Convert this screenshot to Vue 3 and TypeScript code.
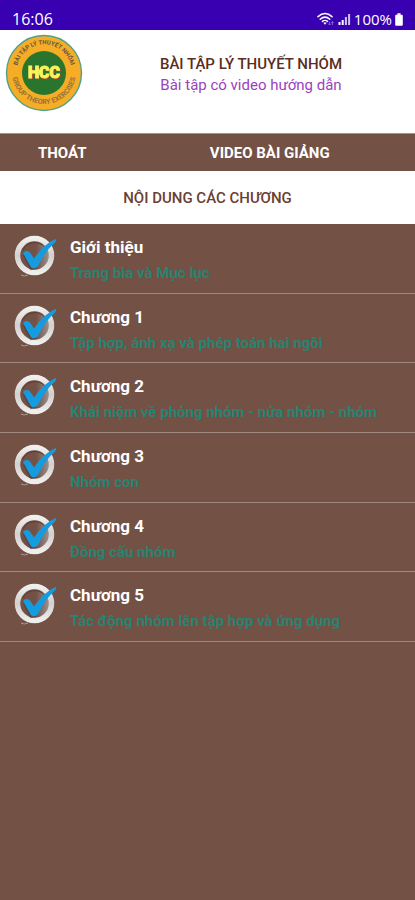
<script setup lang="ts">
interface Chapter {
  id: number
  title: string
  summary: string
}

const chapters: Chapter[] = [
  { id: 0, title: 'Giới thiệu', summary: 'Trang bìa và Mục lục' },
  { id: 1, title: 'Chương 1', summary: 'Tập hợp, ánh xạ và phép toán hai ngôi' },
  { id: 2, title: 'Chương 2', summary: 'Khái niệm về phỏng nhóm - nửa nhóm - nhóm' },
  { id: 3, title: 'Chương 3', summary: 'Nhóm con' },
  { id: 4, title: 'Chương 4', summary: 'Đồng cấu nhóm' },
  { id: 5, title: 'Chương 5', summary: 'Tác động nhóm lên tập hợp và ứng dụng' },
]
</script>

<template>
  <div class="screen">
    <div class="status">
      <span class="clock">16:06</span>
      <div class="indicators">
        <svg class="wifi" viewBox="0 0 18 14" aria-hidden="true">
          <g fill="none" stroke="#fff" stroke-linecap="round">
            <path d="M1 4.6Q8 -1.6 15 4.6" stroke-width="1.6" />
            <path d="M3.2 7.2Q8 3 12.8 7.2" stroke-width="1.5" />
            <path d="M5.4 9.4Q8 7.4 10.6 9.4" stroke-width="1.4" />
          </g>
          <path d="M6.2 10.6H9.8L8 12.8Z" fill="#fff" />
          <path d="M12.6 9.6V13M11.4 11.8L12.6 13L13.8 11.8M15.4 13V9.6M14.4 10.8L15.4 9.6L16.4 10.8" fill="none" stroke="#8f74dc" stroke-width="0.9" />
        </svg>
        <svg class="signal" viewBox="0 0 13 12" aria-hidden="true">
          <path d="M0.5 9h2v3h-2zM3.7 7h2v5h-2z" fill="#fff" />
          <path d="M6.9 4h2v8h-2zM10.1 1h2v11h-2z" fill="#cfc3f2" />
        </svg>
        <span class="charge">100%</span>
        <svg class="battery" viewBox="0 0 8 13" aria-hidden="true">
          <path d="M2.4 0.3h3.2v1.4h1.2q1 0 1 1v9q0 1-1 1H1.2q-1 0-1-1v-9q0-1 1-1h1.2z" fill="#fff" />
        </svg>
      </div>
    </div>

    <header class="masthead">
      <svg class="logo" viewBox="0 0 78 78" role="img" aria-label="HCC">
        <defs>
          <path id="arc-top" d="M12 43A27.5 27.5 0 1 1 66 43" />
          <path id="arc-bottom" d="M7 38A32 32 0 0 0 71 38" />
        </defs>
        <circle cx="39" cy="39" r="37.5" fill="#f4ad24" stroke="#55a08a" stroke-width="1.4" />
        <circle cx="39" cy="39" r="22" fill="#29752e" />
        <text class="ring" text-anchor="middle">
          <textPath href="#arc-top" startOffset="50%">BÀI TẬP LÝ THUYẾT NHÓM</textPath>
        </text>
        <text class="ring lower" text-anchor="middle">
          <textPath href="#arc-bottom" startOffset="50%">GROUP THEORY EXERCISES</textPath>
        </text>
        <text class="monogram" x="39" y="44" text-anchor="middle">HCC</text>
      </svg>
      <div class="heading">
        <h1>BÀI TẬP LÝ THUYẾT NHÓM</h1>
        <p>Bài tập có video hướng dẫn</p>
      </div>
    </header>

    <nav class="actions">
      <button type="button">THOÁT</button>
      <button type="button">VIDEO BÀI GIẢNG</button>
    </nav>

    <h2 class="section">NỘI DUNG CÁC CHƯƠNG</h2>

    <ul class="chapters">
      <li v-for="chapter in chapters" :key="chapter.id">
        <a href="#" class="chapter">
          <svg class="check" viewBox="0 0 44 44" aria-hidden="true">
            <defs>
              <linearGradient :id="`rim-${chapter.id}`" x1="0" y1="0" x2="0" y2="1">
                <stop offset="0" stop-color="#efefed" />
                <stop offset="0.5" stop-color="#d2d0ce" />
                <stop offset="1" stop-color="#efeeec" />
              </linearGradient>
              <linearGradient :id="`well-${chapter.id}`" x1="0" y1="0" x2="1" y2="0">
                <stop offset="0.55" stop-color="#745145" />
                <stop offset="1" stop-color="#9a918e" />
              </linearGradient>
            </defs>
            <path d="M7 40Q10 42 14 40" fill="none" stroke="#a99a93" stroke-width="1" />
            <circle cx="20.5" cy="20.5" r="14.5" :fill="`url(#well-${chapter.id})`" />
            <circle cx="20.5" cy="20.5" r="17" fill="none" :stroke="`url(#rim-${chapter.id})`" stroke-width="5.5" />
            <path d="M9 15A13 13 0 0 1 31 12.500" fill="none" stroke="#5d3b30" stroke-width="1" />
            <path d="M10 20L17 34L22 33" fill="none" stroke="#4b3a35" stroke-width="2" opacity="0.6" />
            <path d="M9 18Q12 14.500 16 17.500L20 23.500Q30 9 41.500 4Q43 5 41 7.500Q31 16 24 31Q20 35.500 16.500 31.500Z" fill="#159ce0" />
          </svg>
          <span class="copy">
            <strong>{{ chapter.title }}</strong>
            <span class="summary">{{ chapter.summary }}</span>
          </span>
        </a>
      </li>
    </ul>
  </div>
</template>

<style>
body {
  margin: 0;
  background: #745145;
}
</style>

<style scoped>
.screen {
  min-height: 100vh;
  background: #745145;
  font-family: Roboto, "Noto Sans", sans-serif;
}

.status {
  display: flex;
  align-items: center;
  justify-content: space-between;
  box-sizing: border-box;
  height: 30px;
  padding: 8px 12px 0;
  background: #3900b1;
  color: #fff;
  font-family: "Open Sans", "Noto Sans", sans-serif;
  font-weight: 500;
  line-height: 20px;
}

.indicators {
  display: flex;
  align-items: center;
  gap: 3px;
}

.clock {
  font-size: 16px;
}

.charge {
  font-size: 15px;
}

.wifi {
  width: 18px;
  height: 14px;
}

.signal {
  width: 13px;
  height: 12px;
}

.battery {
  width: 8px;
  height: 13px;
}

.masthead {
  display: flex;
  align-items: flex-start;
  box-sizing: border-box;
  min-height: 103px;
  padding: 4px 0 0 5px;
  background: #fff;
}

.logo {
  flex: none;
  width: 78px;
  height: 78px;
}

.ring {
  fill: #6b5540;
  font-size: 6px;
  font-weight: 700;
}

.lower {
  fill: #98703c;
  font-size: 7px;
}

.monogram {
  fill: #f7f45c;
  stroke: #f7f45c;
  stroke-width: 1px;
  font-size: 16px;
  font-weight: 900;
  filter: drop-shadow(1px 1px 0 #a2422b);
}

.heading {
  flex: 1;
  padding: 20px 0 0 4px;
  text-align: center;
}

.heading h1,
.heading p {
  margin: 0;
  font-size: 15px;
  line-height: 21px;
}

.heading h1 {
  color: #5c2d20;
  font-weight: 500;
}

.heading p {
  color: #9c3fbd;
  font-weight: 400;
}

.actions {
  display: grid;
  grid-template-columns: 3fr 7fr;
  border-top: 1px solid #a39590;
  background: #745145;
}

.actions button {
  height: 37px;
  padding: 0;
  border: 0;
  background: none;
  color: #fff;
  font: 700 15px/20px Roboto, "Noto Sans", sans-serif;
}

.section {
  margin: 0;
  padding: 17px 0 15px;
  background: #fff;
  color: #6b4034;
  font-size: 15px;
  font-weight: 500;
  line-height: 21px;
  text-align: center;
}

.chapters {
  display: grid;
  grid-auto-rows: 1fr;
  min-height: 418px;
  margin: 0;
  padding: 0;
  list-style: none;
}

.chapters li {
  border-bottom: 1px solid #a08a80;
}

.chapter {
  display: flex;
  gap: 12px;
  padding: 11px 14px 0;
  color: #fff;
  text-decoration: none;
}

.check {
  flex: none;
  width: 44px;
  height: 44px;
}

.copy {
  display: flex;
  flex-direction: column;
  gap: 4px;
  padding-top: 1px;
}

.copy strong {
  font-size: 17px;
  font-weight: 700;
  line-height: 22px;
}

.summary {
  color: #288371;
  font-size: 15px;
  font-weight: 700;
  line-height: 22px;
}
</style>
